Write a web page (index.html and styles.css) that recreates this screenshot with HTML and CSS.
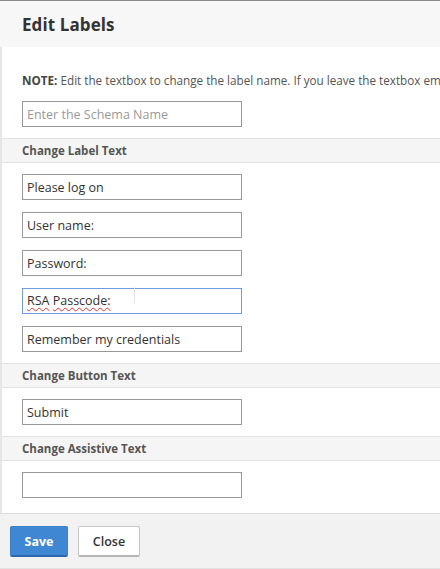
FILE: index.html
```html
<!DOCTYPE html>
<html>
<head>
<meta charset="utf-8">
<link rel="stylesheet" href="styles.css">
</head>
<body>
<div class="dialog">
  <div class="header"><h1 class="title">Edit Labels</h1></div>
  <div class="content">
    <p class="note"><b>NOTE:</b> Edit the textbox to change the label name. If you leave the textbox empty, the default label name is used.</p>
    <div class="field"><input class="box" type="text" placeholder="Enter the Schema Name"></div>
    <div class="section">Change Label Text</div>
    <div class="fields">
      <input class="box" type="text" value="Please log on">
      <input class="box" type="text" value="User name:">
      <input class="box" type="text" value="Password:">
      <div class="box focused"><span class="typo">RSA</span> <span class="typo">Passcode:</span><span class="ibeam"></span></div>
      <input class="box" type="text" value="Remember my credentials">
    </div>
    <div class="section">Change Button Text</div>
    <div class="fields">
      <input class="box" type="text" value="Submit">
    </div>
    <div class="section">Change Assistive Text</div>
    <div class="fields last">
      <input class="box" type="text" value="">
    </div>
  </div>
  <div class="footer">
    <button class="btn primary">Save</button>
    <button class="btn secondary">Close</button>
  </div>
</div>
</body>
</html>
```
FILE: styles.css
```css
* { box-sizing: border-box; }
html, body { margin: 0; padding: 0; }
body {
  width: 440px;
  height: 569px;
  overflow: hidden;
  font-family: "Open Sans", "Noto Sans", sans-serif;
  color: #333;
  background: #fff;
}
.dialog {
  display: flex;
  flex-direction: column;
  height: 569px;
  border-top: 1px solid #8a8a8a;
}
.header {
  height: 46px;
  background: #f7f7f7;
  display: flex;
  align-items: center;
  padding-left: 22px;
}
.title {
  margin: 0;
  font-size: 17px;
  font-weight: 700;
  color: #333;
  letter-spacing: 0.1px;
}
.content {
  flex: 1;
  border-left: 2px solid #e6e6e6;
  background: #fff;
  display: flex;
  flex-direction: column;
}
.note {
  margin: 25px 0 0 20px;
  font-size: 11.7px;
  line-height: 16px;
  color: #555;
  white-space: nowrap;
  overflow: hidden;
}
.note b { font-weight: 700; color: #444; }
.field { padding: 13px 0 11px 20px; }
.fields {
  display: flex;
  flex-direction: column;
  gap: 12px;
  padding: 11px 0 11px 20px;
}
.fields.last { padding-bottom: 0; }
.box {
  display: block;
  width: 220px;
  height: 26px;
  margin: 0;
  padding: 0 4px;
  border: 1px solid #999;
  border-radius: 0;
  background: #fff;
  font-family: "Open Sans", "Noto Sans", sans-serif;
  font-size: 12.5px;
  line-height: 24px;
  color: #333;
  outline: none;
}
.box::placeholder { color: #999; }
.focused {
  border-color: #6f9be0;
  position: relative;
}
.typo {
  text-decoration: underline wavy #e03030;
  text-decoration-thickness: 1px;
  text-underline-offset: 2px;
}
.ibeam {
  position: absolute;
  left: 111px;
  top: -2px;
  width: 1px;
  height: 16px;
  background: #e2e2e2;
}
.section {
  height: 25px;
  background: #f5f5f5;
  border-top: 1px solid #e2e2e2;
  border-bottom: 1px solid #e2e2e2;
  display: flex;
  align-items: center;
  padding-left: 20px;
  font-size: 11.5px;
  font-weight: 700;
  color: #555;
}
.footer {
  height: 56px;
  flex: none;
  background: #f2f2f2;
  border-top: 1px solid #dcdcdc;
  border-bottom: 1px solid #e2e2e2;
  display: flex;
  align-items: flex-start;
  gap: 10px;
  padding: 12px 0 0 10px;
}
.btn {
  height: 31px;
  border-radius: 2px;
  font-family: "Open Sans", "Noto Sans", sans-serif;
  font-size: 12.5px;
  font-weight: 700;
  padding: 0;
  cursor: pointer;
}
.primary {
  width: 58px;
  background: #3f87d2;
  color: #fff;
  border: 1px solid #3a7fc8;
  border-bottom: 2px solid #2a67ad;
}
.secondary {
  width: 62px;
  background: #fff;
  color: #333;
  border: 1px solid #c6c6c6;
  border-bottom: 2px solid #b5b5b5;
  font-weight: 600;
}
```
